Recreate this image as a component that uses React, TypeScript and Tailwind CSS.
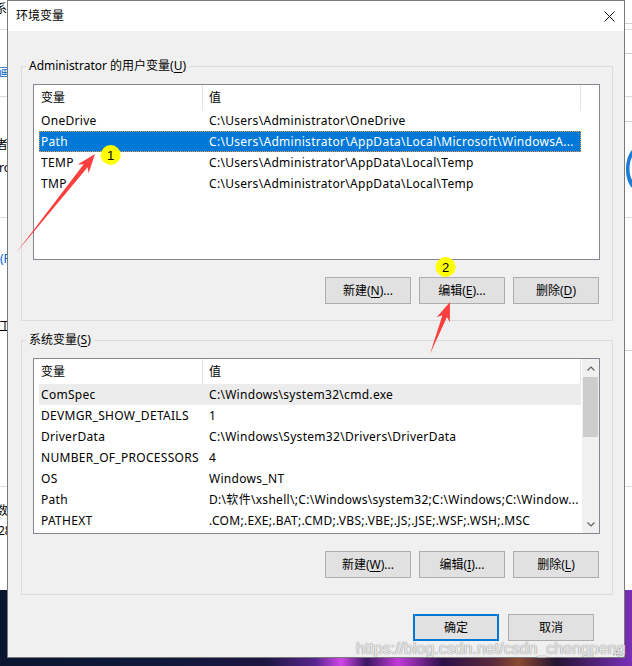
import type { ReactNode } from "react";

type Row = { name: string; value: string; selected?: boolean; hover?: boolean };

const userVars: Row[] = [
  { name: "OneDrive", value: "C:\\Users\\Administrator\\OneDrive" },
  {
    name: "Path",
    value: "C:\\Users\\Administrator\\AppData\\Local\\Microsoft\\WindowsA...",
    selected: true,
  },
  { name: "TEMP", value: "C:\\Users\\Administrator\\AppData\\Local\\Temp" },
  { name: "TMP", value: "C:\\Users\\Administrator\\AppData\\Local\\Temp" },
];

const sysVars: Row[] = [
  { name: "ComSpec", value: "C:\\Windows\\system32\\cmd.exe", hover: true },
  { name: "DEVMGR_SHOW_DETAILS", value: "1" },
  { name: "DriverData", value: "C:\\Windows\\System32\\Drivers\\DriverData" },
  { name: "NUMBER_OF_PROCESSORS", value: "4" },
  { name: "OS", value: "Windows_NT" },
  { name: "Path", value: "D:\\软件\\xshell\\;C:\\Windows\\system32;C:\\Windows;C:\\Window..." },
  { name: "PATHEXT", value: ".COM;.EXE;.BAT;.CMD;.VBS;.VBE;.JS;.JSE;.WSF;.WSH;.MSC" },
];

function Mn({ children }: { children: ReactNode }) {
  return <span className="underline underline-offset-[2px]">{children}</span>;
}

function Btn({ children, primary }: { children: ReactNode; primary?: boolean }) {
  return (
    <button
      type="button"
      className={
        primary
          ? "flex h-[27px] w-[86px] items-center justify-center border-2 border-[#0078d7] bg-[#e1e1e1]"
          : "flex h-[27px] w-[86px] items-center justify-center border border-[#adadad] bg-[#e1e1e1]"
      }
    >
      {children}
    </button>
  );
}

function Group({ label, children }: { label: ReactNode; children: ReactNode }) {
  return (
    <fieldset className="border border-[#dcdcdc] pb-[16px] pl-[11px] pr-[12px] pt-[10px]">
      <legend className="-ml-[7px] px-[3px] leading-[16px]">{label}</legend>
      {children}
    </fieldset>
  );
}

function Scrollbar() {
  return (
    <div className="flex w-[17px] flex-col bg-[#f0f0f0]">
      <div className="flex h-[18px] items-center justify-center">
        <svg width="8" height="5" viewBox="0 0 8 5">
          <path d="M0.5 4.5 L4 1 L7.5 4.5" fill="none" stroke="#606060" strokeWidth="1.2" />
        </svg>
      </div>
      <div className="mx-[1px] h-[60px] bg-[#cdcdcd]" />
      <div className="flex-1" />
      <div className="flex h-[17px] items-center justify-center">
        <svg width="8" height="5" viewBox="0 0 8 5">
          <path d="M0.5 0.5 L4 4 L7.5 0.5" fill="none" stroke="#606060" strokeWidth="1.2" />
        </svg>
      </div>
    </div>
  );
}

function VarList({ rows, scroll }: { rows: Row[]; scroll?: boolean }) {
  return (
    <div className="flex h-[176px] border border-[#828790] bg-white">
      <div className="min-w-0 flex-1">
        <div className="ml-[5px] flex h-[25px]">
          <div className="flex w-[164px] items-center border-r border-[#e5e5e5] pl-[2px]">变量</div>
          <div className="flex w-[378px] items-center border-r border-[#e5e5e5] pl-[6px]">值</div>
        </div>
        {rows.map((r) => (
          <div
            key={r.name}
            className={
              r.selected
                ? "ml-[5px] flex h-[21px] w-[542px] items-center bg-[#0078d7] tracking-[0.3px] text-white outline-1 -outline-offset-1 outline-dotted outline-[#e89a4a]"
                : r.hover
                  ? "ml-[5px] flex h-[21px] w-[542px] items-center bg-[#ececec] tracking-[0.3px]"
                  : "ml-[5px] flex h-[21px] w-[542px] items-center tracking-[0.3px]"
            }
          >
            <div className="w-[170px] whitespace-nowrap pl-[2px]">{r.name}</div>
            <div className="min-w-0 flex-1 overflow-hidden whitespace-nowrap">{r.value}</div>
          </div>
        ))}
      </div>
      {scroll && <Scrollbar />}
    </div>
  );
}

function Backdrop() {
  return (
    <div className="absolute inset-0 bg-white">
      {/* bits of the window behind, only the edges show */}
      <div className="absolute left-0 top-[29px] h-px w-full bg-[#dcdcdc]" />
      <div className="absolute left-0 top-[96px] h-px w-full bg-[#dcdcdc]" />
      <div className="absolute left-0 top-[217px] h-px w-full bg-[#dcdcdc]" />
      <div className="absolute left-0 top-[486px] h-px w-full bg-[#dcdcdc]" />
      <div className="absolute right-0 top-[23px] h-px w-[8px] bg-[#d0d0d0]" />
      <div className="absolute right-0 top-[53px] h-px w-[8px] bg-[#d0d0d0]" />
      <div className="absolute right-0 top-[121px] h-px w-[8px] bg-[#d0d0d0]" />
      <div className="absolute right-0 top-[350px] h-px w-[8px] bg-[#d0d0d0]" />
      <div className="absolute left-[-5px] top-[0px] whitespace-nowrap">系统</div>
      <div className="absolute left-[-1px] top-[64px] whitespace-nowrap text-[#0066cc]">画布</div>
      <div className="absolute left-[-4px] top-[136px] whitespace-nowrap">者</div>
      <div className="absolute left-[-1px] top-[159px] whitespace-nowrap">ro</div>
      <div className="absolute left-[0px] top-[250px] whitespace-nowrap text-[#0066cc]">(R</div>
      <div className="absolute left-[-1px] top-[318px] whitespace-nowrap">工</div>
      <div className="absolute left-[-4px] top-[502px] whitespace-nowrap">数</div>
      <div className="absolute left-[-2px] top-[522px] whitespace-nowrap">28</div>
      <svg className="absolute right-0 top-[150px]" width="7" height="38" viewBox="0 0 7 38">
        <path d="M7 0 C2 6 1 14 1 19 C1 25 2 32 7 38 L7 30 C5 26 4.5 22 4.5 19 C4.5 15 5 11 7 7 Z" fill="#1c7cd5" />
      </svg>
      <div className="absolute bottom-0 left-0 right-0 top-[590px] bg-[linear-gradient(90deg,#0a1630_0%,#10193a_25%,#1c1640_42%,#5a2590_50%,#d047e8_54%,#3a1860_58%,#c23ad8_63%,#2a1048_70%,#5a2a3c_78%,#8a4a30_82%,#241433_88%,#7a2fb8_100%)]" />
    </div>
  );
}

function Annotations() {
  return (
    <svg className="pointer-events-none absolute inset-0" width="632" height="666" viewBox="0 0 632 666">
      <polygon
        points="16,253 87.6,167.3 88.6,173.2 95,154 77.7,164.5 83.7,164.2"
        fill="#fb3e3e"
      />
      <polygon
        points="430,354 447,316.9 449.8,322.3 450,302 436.7,317.3 442.4,315.2"
        fill="#fb3e3e"
      />
      <circle cx="110.7" cy="155" r="10" fill="#ffff00" />
      <text x="110.7" y="159.5" textAnchor="middle" fontSize="13" fontFamily="Liberation Sans, sans-serif" fill="#000">
        1
      </text>
      <circle cx="445.6" cy="267" r="10" fill="#ffff00" />
      <text x="445.6" y="271.5" textAnchor="middle" fontSize="13" fontFamily="Liberation Sans, sans-serif" fill="#000">
        2
      </text>
      <g fill="#a8a8a8">
        <rect x="619" y="648" width="1.5" height="1.5" />
        <rect x="619" y="651" width="1.5" height="1.5" />
        <rect x="616" y="651" width="1.5" height="1.5" />
        <rect x="619" y="654" width="1.5" height="1.5" />
        <rect x="616" y="654" width="1.5" height="1.5" />
        <rect x="613" y="654" width="1.5" height="1.5" />
      </g>
    </svg>
  );
}

export default function App() {
  return (
    <div className="relative h-[666px] w-[632px] overflow-hidden font-['Noto_Sans','Noto_Sans_CJK_SC',sans-serif] text-[12px] text-black">
      <Backdrop />

      <div className="absolute left-[7px] top-0 flex h-[658px] w-[618px] flex-col border border-[#7a7a7a] bg-[#f0f0f0]">
        <div className="flex h-[30px] items-center justify-between bg-white pl-[8px] pr-[9px]">
          <span>环境变量</span>
          <svg width="11" height="11" viewBox="0 0 11 11">
            <path d="M0.5 0.5 L10.5 10.5 M10.5 0.5 L0.5 10.5" stroke="#111" strokeWidth="1" />
          </svg>
        </div>

        <div className="flex flex-1 flex-col pl-[13px] pr-[11px] pt-[27px]">
          <Group
            label={
              <>
                Administrator 的用户变量(<Mn>U</Mn>)
              </>
            }
          >
            <VarList rows={userVars} />
            <div className="mt-[17px] flex justify-end gap-[8px] pr-[1px]">
              <Btn>
                新建(<Mn>N</Mn>)...
              </Btn>
              <Btn>
                编辑(<Mn>E</Mn>)...
              </Btn>
              <Btn>
                删除(<Mn>D</Mn>)
              </Btn>
            </div>
          </Group>

          <div className="mt-[11px]">
            <Group
              label={
                <>
                  系统变量(<Mn>S</Mn>)
                </>
              }
            >
              <VarList rows={sysVars} scroll />
              <div className="mt-[17px] flex justify-end gap-[8px] pr-[1px]">
                <Btn>
                  新建(<Mn>W</Mn>)...
                </Btn>
                <Btn>
                  编辑(<Mn>I</Mn>)...
                </Btn>
                <Btn>
                  删除(<Mn>L</Mn>)
                </Btn>
              </div>
            </Group>
          </div>

          <div className="mt-[19px] flex justify-end gap-[9px] pr-[19px]">
            <Btn primary>确定</Btn>
            <Btn>取消</Btn>
          </div>
        </div>
      </div>

      <Annotations />

      <div className="pointer-events-none absolute left-[356px] top-[637px] whitespace-nowrap font-['Liberation_Sans',sans-serif] text-[16px] text-white/80 [text-shadow:0_0_1px_#8a8a8a,0_0_1px_#8a8a8a]">
        https://blog.csdn.net/csdn_chengpeng
      </div>
    </div>
  );
}
